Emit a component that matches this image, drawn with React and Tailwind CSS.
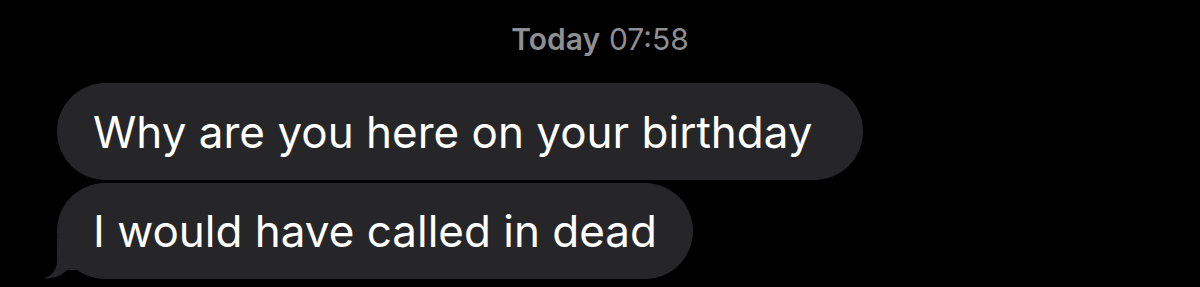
export default function App() {
  return (
    <div className="w-[1200px] h-[287px] bg-black overflow-hidden" style={{ fontFamily: "Inter, 'Noto Sans', sans-serif" }}>
      <div className="flex justify-center pt-[21px] h-[83px] text-[30px] leading-[36px] text-[#8e8e93]">
        <span className="font-semibold">Today</span>
        <span className="ml-[9px]">07:58</span>
      </div>
      <div className="flex flex-col items-start gap-[3px] pl-[57px]">
        <div className="h-[97px] flex items-center pl-[36px] pr-[50px] rounded-full bg-[#262628] text-white text-[44px] leading-none">
          Why are you here on your birthday
        </div>
        <div className="relative">
          <svg className="absolute left-[-15px] bottom-0" width="40" height="40" viewBox="0 0 40 40">
            <path d="M15 0 L15 22 C15 32 8 38 1 39.5 C9 40 18 38 25 31 L40 31 L40 0 Z" fill="#262628" />
          </svg>
          <div className="relative h-[96px] flex items-center px-[36px] rounded-full bg-[#262628] text-white text-[44px] leading-none">
            I would have called in dead
          </div>
        </div>
      </div>
    </div>
  );
}
